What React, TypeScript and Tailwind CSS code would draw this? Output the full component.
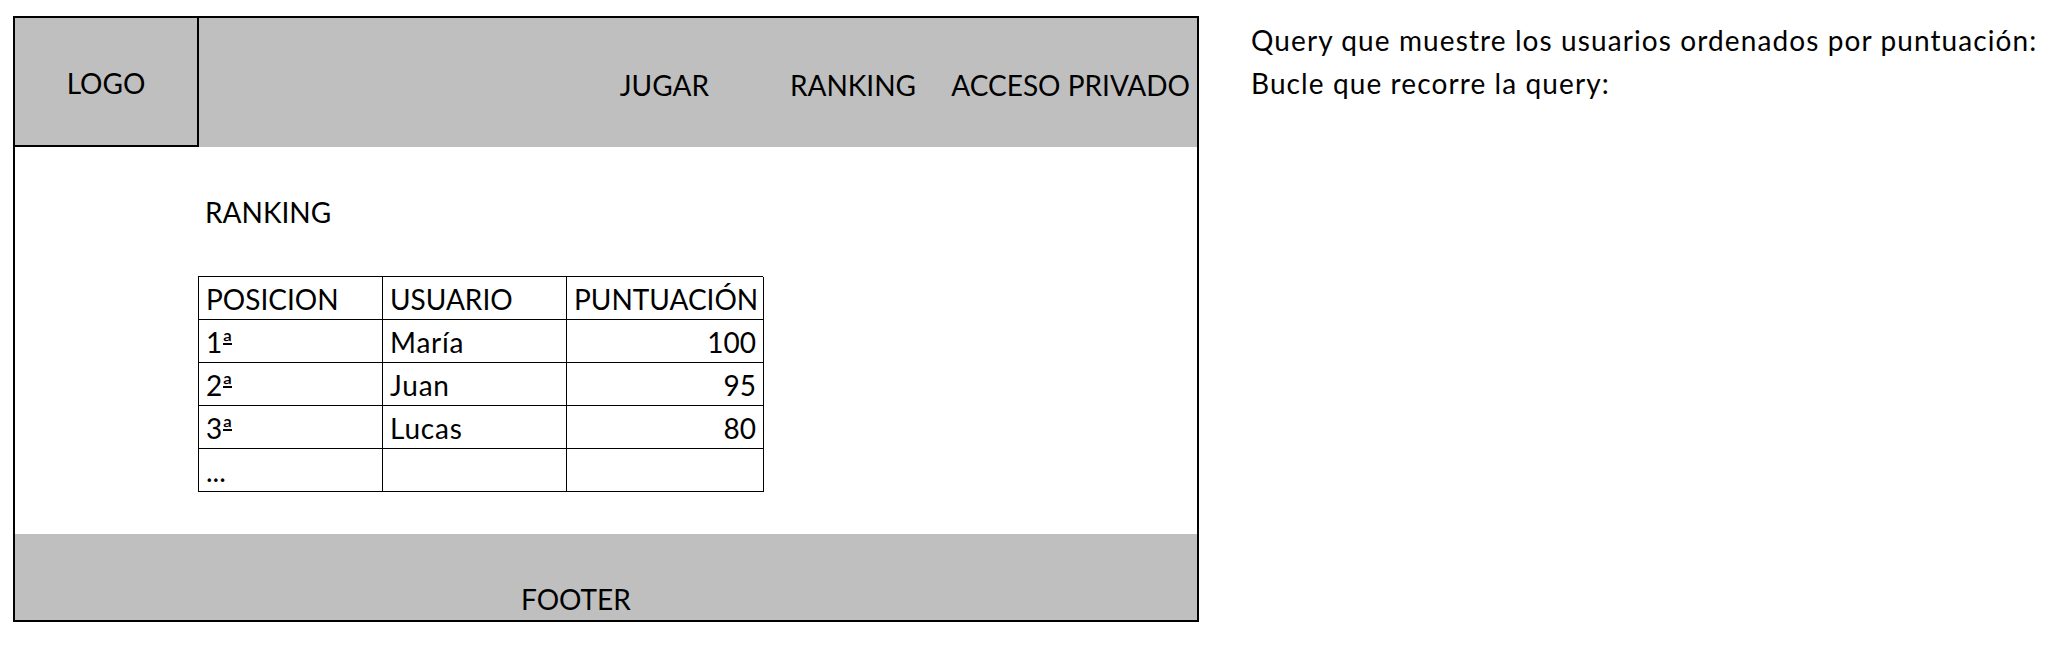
const rows = [
  { pos: "1", user: "María", score: "100" },
  { pos: "2", user: "Juan", score: "95" },
  { pos: "3", user: "Lucas", score: "80" },
];

const font = { fontFamily: "Lato, 'Open Sans', sans-serif" };

function Ordinal({ n }: { n: string }) {
  return (
    <>
      {n}
      <span className="relative">
        ª
        <span className="absolute left-[1px] right-[1px] top-[18px] h-[2px] bg-black" />
      </span>
    </>
  );
}

const cell = "h-[43px] border-r border-b border-black pt-[1px] leading-[42px]";

export default function App() {
  return (
    <div
      className="flex items-start bg-white text-black text-[28px] pt-4 pl-[13px] h-[652px] w-[2058px]"
      style={font}
    >
      {/* wireframe */}
      <div className="flex w-[1186px] flex-col border-2 border-black">
        <header className="flex h-[129px] bg-[#bfbfbf]">
          <div className="flex w-[184px] items-end justify-center border-r-2 border-b-2 border-black pb-[40px]">
            <span className="leading-[43px]">LOGO</span>
          </div>
          <nav className="flex flex-1 items-end justify-end pb-[40px] leading-[43px] whitespace-nowrap">
            <span className="w-[200px] pr-[7px] text-right">JUGAR</span>
            <span className="w-[207px] pr-[7px] text-right">RANKING</span>
            <span className="w-[274px] pr-[7px] text-right">ACCESO PRIVADO</span>
          </nav>
        </header>

        <main className="flex h-[387px] flex-col pt-[44px] pl-[183px]">
          <h2 className="h-[43px] pl-[7px] leading-[43px]">RANKING</h2>
          <div className="mt-[42px] grid w-[565px] grid-cols-[184px_184px_197px] border-t border-l border-black">
            <div className={`${cell} pl-[7px]`}>POSICION</div>
            <div className={`${cell} pl-[7px]`}>USUARIO</div>
            <div className={`${cell} pl-[7px]`}>PUNTUACIÓN</div>
            {rows.map((r) => (
              <div key={r.pos} className="contents">
                <div className={`${cell} pl-[7px]`}>
                  <Ordinal n={r.pos} />
                </div>
                <div className={`${cell} pl-[7px] tracking-[0.8px]`}>{r.user}</div>
                <div className={`${cell} pr-[7px] text-right`}>{r.score}</div>
              </div>
            ))}
            <div className={`${cell} pl-[7px]`}>...</div>
            <div className={cell} />
            <div className={cell} />
          </div>
        </main>

        <footer className="flex h-[86px] items-end bg-[#bfbfbf] pb-[-1px] pl-[506px]">
          <span className="translate-y-[1px] leading-[43px]">FOOTER</span>
        </footer>
      </div>

      {/* notes */}
      <div className="ml-[52px] pt-[3px] leading-[43px] tracking-[1.1px] whitespace-nowrap">
        <p>Query que muestre los usuarios ordenados por puntuación:</p>
        <p>Bucle que recorre la query:</p>
      </div>
    </div>
  );
}
